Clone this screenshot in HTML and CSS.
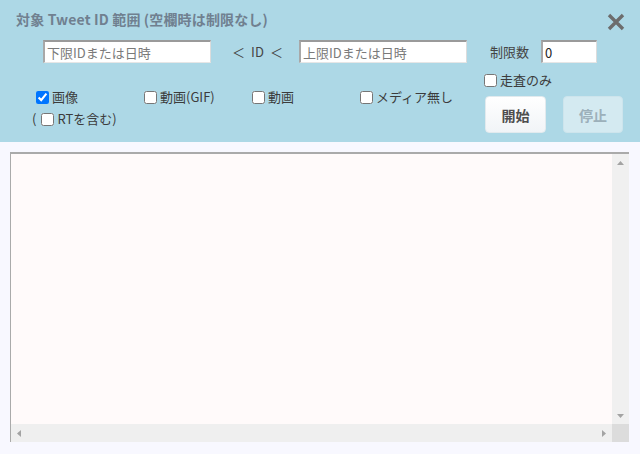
FILE: index.html
```html
<!DOCTYPE html>
<html lang="ja">
<head>
<meta charset="utf-8">
<title>Tweet ID 範囲</title>
<link rel="stylesheet" href="styles.css">
</head>
<body>
<div class="panel">
  <div class="title-row">
    <div class="title">対象 Tweet ID 範囲 (空欄時は制限なし)</div>
    <svg class="close" width="20" height="20" viewBox="0 0 20 20"><path d="M3 3 L17 17 M17 3 L3 17" stroke="#6d6d6d" stroke-width="3.4" fill="none"/></svg>
  </div>
  <div class="range-row">
    <input class="id-input" type="text" placeholder="下限IDまたは日時">
    <span class="lt"><span>＜</span><span>ID</span><span>＜</span></span>
    <input class="id-input" type="text" placeholder="上限IDまたは日時">
    <span class="limit-label">制限数</span>
    <input class="limit-input" type="text" value="0">
  </div>
  <div class="opts-row">
    <div class="media">
      <label class="cb"><input type="checkbox" checked><span>画像</span></label>
      <label class="cb"><input type="checkbox"><span>動画(GIF)</span></label>
      <label class="cb"><input type="checkbox"><span>動画</span></label>
      <label class="cb"><input type="checkbox"><span>メディア無し</span></label>
      <label class="cb rt"><span class="paren">(</span><input type="checkbox"><span>RTを含む)</span></label>
    </div>
    <div class="actions">
      <label class="cb scan"><input type="checkbox"><span>走査のみ</span></label>
      <div class="buttons">
        <button class="btn start">開始</button>
        <button class="btn stop" disabled>停止</button>
      </div>
    </div>
  </div>
</div>
<div class="main">
  <div class="log">
    <textarea class="log-text" wrap="off"></textarea>
    <div class="vbar">
      <svg width="7" height="4" viewBox="0 0 7 4"><polygon points="0,4 7,4 3.5,0" fill="#a3a3a3"/></svg>
      <svg width="7" height="4" viewBox="0 0 7 4"><polygon points="0,0 7,0 3.5,4" fill="#a3a3a3"/></svg>
    </div>
    <div class="hbar">
      <svg width="4" height="7" viewBox="0 0 4 7"><polygon points="4,0 4,7 0,3.5" fill="#a3a3a3"/></svg>
      <svg width="4" height="7" viewBox="0 0 4 7"><polygon points="0,0 0,7 4,3.5" fill="#a3a3a3"/></svg>
    </div>
    <div class="corner"></div>
  </div>
</div>
</body>
</html>
```
FILE: styles.css
```css
html, body {
  margin: 0;
  padding: 0;
  background: #f8f8ff;
  font-family: "Noto Sans CJK JP", "Noto Sans", sans-serif;
  color: #3c3c3c;
}

.panel {
  background: #add8e6;
  height: 142px;
  box-sizing: border-box;
  padding: 0 14px 0 16px;
}

.title-row {
  display: flex;
  justify-content: space-between;
  align-items: flex-start;
  height: 40px;
}

.title {
  margin-top: 9px;
  font-size: 14px;
  letter-spacing: 0.15px;
  line-height: 20px;
  font-weight: bold;
  color: #708090;
}

.close {
  margin-top: 12px;
  display: block;
}

.range-row {
  display: flex;
  align-items: center;
  height: 23px;
  font-size: 13px;
}

.id-input, .limit-input {
  box-sizing: border-box;
  height: 23px;
  border-style: solid;
  border-width: 2px 1px 1px 2px;
  border-color: #9a9a9a #dcdcdc #e6e6e6 #a8a8a8;
  background: #fff;
  padding: 0 2px;
  font-family: "Noto Sans CJK JP", "Noto Sans", sans-serif;
  font-size: 13px;
  color: #222;
  outline: none;
}

.id-input {
  width: 168px;
}

.id-input:first-child {
  margin-left: 27px;
}

.id-input::placeholder {
  color: #7a7a7a;
}

.lt {
  display: flex;
  justify-content: space-between;
  width: 51px;
  margin: 0 16px 0 21px;
  color: #444;
  line-height: 20px;
}

.limit-label {
  margin: 0 12px 0 23px;
  color: #444;
  line-height: 20px;
}

.limit-input {
  width: 56px;
}

.opts-row {
  display: flex;
  margin-top: 8px;
}

.media {
  margin-left: 20px;
  padding-top: 15px;
  display: grid;
  grid-template-columns: repeat(4, 108px);
  grid-auto-rows: 22px;
}

.cb {
  display: flex;
  align-items: center;
  font-size: 13px;
  line-height: 18px;
  color: #3c3c3c;
}

.cb input {
  margin: 0 3px 0 0;
  width: 13px;
  height: 13px;
}

.rt {
  margin-left: -4px;
  grid-column: 1 / span 2;
}

.paren {
  margin-right: 5px;
}

.actions {
  margin-left: 16px;
  display: flex;
  flex-direction: column;
}

.scan {
  height: 18px;
}

.buttons {
  display: flex;
  gap: 17px;
  margin-top: 7px;
  margin-left: 1px;
}

.btn {
  width: 61px;
  height: 37px;
  border-radius: 4px;
  font-family: "Noto Sans CJK JP", "Noto Sans", sans-serif;
  font-size: 14px;
  font-weight: bold;
  padding: 0;
}

.start {
  background: linear-gradient(#ffffff, #f1f4f7);
  border: 1px solid #e2eaee;
  color: #4e4e4e;
}

.stop {
  width: 60px;
  background: #d4eaf1;
  border: 1px solid #cde4ec;
  color: #9cb0ba;
}

.main {
  padding: 10px 11px 0 10px;
}

.log {
  display: grid;
  grid-template-columns: 1fr 17px;
  grid-template-rows: 1fr 18px;
  height: 290px;
  box-sizing: border-box;
  border-top: 2px solid #aaaaaa;
  border-left: 1px solid #aaaaaa;
  background: #fffafa;
}

.log-text {
  border: none;
  background: #fffafa;
  resize: none;
  overflow: hidden;
  margin: 0;
  padding: 2px;
  outline: none;
  font-family: "Noto Sans CJK JP", "Noto Sans", sans-serif;
  font-size: 13px;
}

.vbar {
  background: #f0f0f0;
  display: flex;
  flex-direction: column;
  justify-content: space-between;
  align-items: center;
  padding: 7px 0 6px;
}

.hbar {
  background: #efefef;
  display: flex;
  justify-content: space-between;
  align-items: center;
  padding: 0 6px 0 6px;
}

.vbar svg, .hbar svg {
  display: block;
}

.corner {
  background: #dcdcdc;
}
```
